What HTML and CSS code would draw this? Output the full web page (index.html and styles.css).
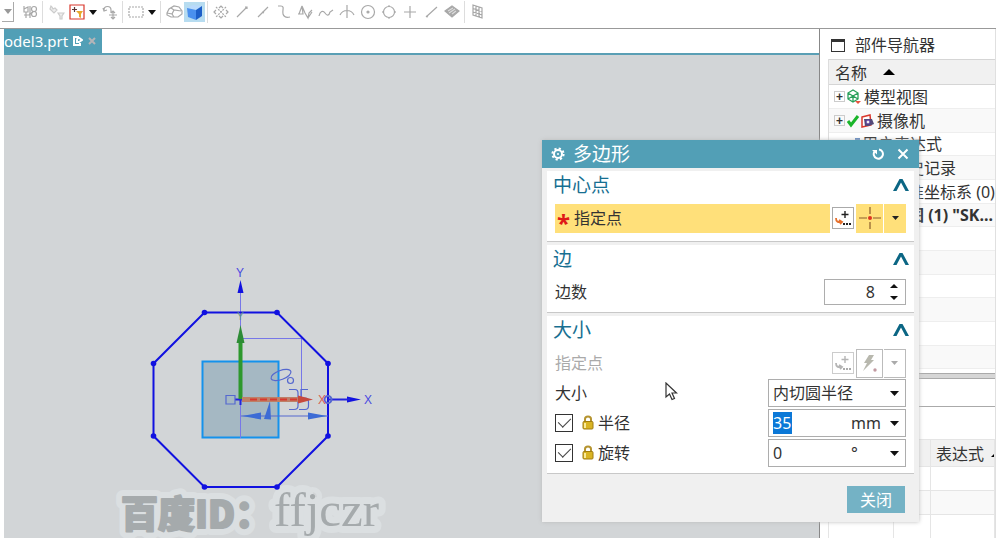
FILE: index.html
```html
<!DOCTYPE html>
<html lang="zh-CN">
<head>
<meta charset="utf-8">
<title>model3.prt</title>
<link rel="stylesheet" href="styles.css">
</head>
<body>
<div class="app">
  <div class="toolbar" role="toolbar" aria-label="草图工具">
    <button class="drop dim boxed" aria-label="更多"><svg width="8" height="5"><path d="M0 0H8L4 5Z"/></svg></button>
    <span class="sep none"></span>
    <button class="tool" aria-label="装配"><svg viewBox="0 0 18 18"><path d="M3 3v6h4V4L3 6M5 9v6M3 12h5l4-3M9 3v12"/><circle cx="13" cy="6" r="2.500"/><circle cx="13" cy="11" r="2.500"/></svg></button>
    <span class="sep"></span>
    <button class="tool faint" aria-label="重置过滤器"><svg viewBox="0 0 18 18"><path d="M4 3l-1 3 4 4 3-3-2-2-2 1-1-2zM11 10h6l-2 3v3h-2v-3z"/></svg></button>
    <button class="tool" aria-label="选择过滤器"><svg viewBox="0 0 18 18"><path class="redbox" d="M2 2H16V16H2Z"/><path class="dark" d="M6.500 4v5M4 6.500h5"/><path class="gold" d="M8 8h7l-2 3v4l-2-1v-3z"/></svg></button>
    <button class="drop" aria-label="过滤选项"><svg width="8" height="5"><path d="M0 0H8L4 5Z"/></svg></button>
    <button class="tool" aria-label="移动对象"><svg viewBox="0 0 18 18"><path d="M3 7a3.500 3.500 0 0 1 7 0v3M2 5l1 3 3-1M8 12h8M12 8v8M10 10l2-2 2 2M10 14l2 2 2-2"/></svg></button>
    <span class="sep"></span>
    <button class="tool" aria-label="矩形选择"><svg viewBox="0 0 18 18"><path class="dash" d="M2 4H16V14H2Z"/></svg></button>
    <button class="drop" aria-label="选择方式"><svg width="8" height="5"><path d="M0 0H8L4 5Z"/></svg></button>
    <span class="sep"></span>
    <button class="tool" aria-label="线框"><svg viewBox="0 0 18 18"><path d="M2 10l2-4 5-3 5 1 3 4v3l-4 3H6l-4-2zM2 10l5 1 2 3M7 11l2-4 7 1M9 7L6 5"/></svg></button>
    <button class="tool on" aria-label="着色"><svg viewBox="0 0 18 18"><path class="c1" d="M1 5l6-3 9 1-6 4z"/><path class="c2" d="M1 5l9 2v10l-8-3z"/><path class="c3" d="M10 7l6-4v10l-6 4z"/></svg></button>
    <span class="sep"></span>
    <button class="tool" aria-label="捕捉"><svg viewBox="0 0 18 18"><path class="dash" d="M4 4l10 10M14 4L4 14"/><path d="M7 5l2-2 2 2M7 13l2 2 2-2M4 7L2 9l2 2M14 7l2 2-2 2"/></svg></button>
    <button class="tool" aria-label="端点"><svg viewBox="0 0 18 18"><path d="M4 14L14 4M12 4h2v2"/></svg></button>
    <button class="tool" aria-label="中点"><svg viewBox="0 0 18 18"><path d="M4 14L14 4M8 9l2 1"/></svg></button>
    <button class="tool" aria-label="控制点"><svg viewBox="0 0 18 18"><path d="M3 3h3c4 0 1 5 2 8 1 3 3 4 7 3"/></svg></button>
    <button class="tool" aria-label="极点"><svg viewBox="0 0 18 18"><path d="M2 11h5L6 3l-3 8M6 3l3 7 3 5 1-5 3-3M12 15l4-6"/></svg></button>
    <button class="tool" aria-label="样条"><svg viewBox="0 0 18 18"><path d="M2 13c1-5 4-6 6-3s4 3 5-1l3-2"/></svg></button>
    <button class="tool" aria-label="交点"><svg viewBox="0 0 18 18"><path d="M9 2v13M2 12c3-6 11-6 14 0"/></svg></button>
    <button class="tool" aria-label="圆心"><svg viewBox="0 0 18 18"><circle cx="9" cy="9" r="6.500"/><circle class="fill" cx="9" cy="9" r="1"/></svg></button>
    <button class="tool" aria-label="象限点"><svg viewBox="0 0 18 18"><circle cx="9" cy="9" r="5.500"/><path d="M8 3h2M8 15h2M3 8v2M15 8v2"/></svg></button>
    <button class="tool" aria-label="现有点"><svg viewBox="0 0 18 18"><path d="M9 3v12M3 9h12"/></svg></button>
    <button class="tool" aria-label="曲线上的点"><svg viewBox="0 0 18 18"><path d="M4 14L15 4M4 13l2 1"/></svg></button>
    <button class="tool" aria-label="面上的点"><svg viewBox="0 0 18 18"><path class="fill" d="M2 8l7-5 7 5-7 6z"/><path class="light" d="M5 8l5-3M6 10l6-4M9 11l4-3"/></svg></button>
    <span class="sep"></span>
    <button class="tool" aria-label="网格"><svg viewBox="0 0 18 18"><path d="M4 2l9 3v10l-9-3zM4 5.500l9 3M4 9l9 3M7 3v10M10 4v10"/></svg></button>
  </div>

  <div class="main">
    <main class="work">
      <div class="tabs">
        <div class="tab"><span class="name">odel3.prt</span>
          <svg width="10" height="10" viewBox="0 0 10 10"><path class="line" d="M6 1H1V9H7V7M5 1L9 4L6 6H4V4Z"/></svg>
          <button class="tabclose" aria-label="关闭标签"><svg width="8" height="8" viewBox="0 0 8 8"><path d="M1 1L7 7M7 1L1 7"/></svg></button>
        </div>
      </div>
      <div class="canvas">
        <svg class="drawing" width="400" height="483" viewBox="4 55 400 483">
          <g class="halo"><text class="wm1" x="121" y="528">百度ID：</text><text class="wm2" x="274" y="526">ffjczr</text></g>
          <g class="mark"><text class="wm1" x="121" y="528">百度ID：</text><text class="wm2" x="274" y="526">ffjczr</text></g>
          <rect class="square" x="202.500" y="361.500" width="76" height="76"/>
          <path class="thin" d="M240.500 290V438M240 338.500H302M301.500 338V398M328 363V438"/>
          <path class="oct" d="M204.500 312.500H277L328 363.500V436L277 487H204.500L153.500 436V363.500Z"/>
          <g class="dots"><circle cx="204.500" cy="312.500" r="2.800"/><circle cx="277" cy="312.500" r="2.800"/><circle cx="328" cy="363.500" r="2.800"/><circle cx="328" cy="436" r="2.800"/><circle cx="277" cy="487" r="2.800"/><circle cx="204.500" cy="487" r="2.800"/><circle cx="153.500" cy="436" r="2.800"/><circle cx="153.500" cy="363.500" r="2.800"/>
            <path d="M240.500 280L243.500 293H237.500ZM361 399.500L347 396.500V402.500Z"/></g>
          <path class="axis" d="M328 399.500H350M235 399.500H244M240.500 395V405"/>
          <path class="dim1" d="M241 416H328M226 395.500H235V404H226ZM289 389.500H295Q298 389.500 298 393V397Q298 399.500 294 399.500Q298 399.500 298 403V406Q298 409.500 294 409.500H289M308 389.500H301V398H305Q308.500 398 308.500 402V406Q308.500 409.500 305 409.500H299"/>
          <path class="dim2" d="M242 416L261 412.500V419.500ZM327 416L308 412.500V419.500ZM270 401L271 419.500L264 419Z"/>
          <ellipse class="dim1" cx="281" cy="375" rx="10.500" ry="4.500" transform="rotate(-20 281 375)"/><circle class="dim1" cx="290.500" cy="380.500" r="3"/>
          <circle class="dim1 knot" cx="328" cy="399.500" r="3.500"/>
          <path class="green" d="M240.500 399V340"/><path class="greenhead" d="M240.500 325L244.500 343H236.500Z"/>
          <path class="red" d="M242 399.500H300"/><path class="reddash" d="M250 399.500H300"/><path class="redhead" d="M313 399.500L298 395.500V403.500Z"/>
          <text class="lab" x="236" y="277">Y</text><text class="lab" x="364" y="404">X</text><text class="lab gy" x="237" y="320">Y</text><text class="lab rx" x="318" y="404">X</text>
        </svg>
      </div>
    </main>

    <aside class="side">
      <h2 class="sidehead"><span class="winicon"></span>部件导航器</h2>
      <div class="tree">
        <div class="treehead">名称<svg width="12" height="6"><path d="M0 6H12L6 0Z"/></svg></div>
        <div class="row"><button class="plus" aria-label="展开">+</button><svg width="15" height="16" viewBox="0 0 15 16"><path class="gr" d="M1 4L6 1L11 4V10L6 13L1 10ZM1 4L6 7L11 4M6 7V13M1 10L6 7L11 10"/><path class="rd" d="M8 12L14 12L11 15"/></svg><span>模型视图</span></div>
        <div class="row alt"><button class="plus" aria-label="展开">+</button><svg width="28" height="16" viewBox="0 0 28 16"><path class="tick" d="M1 8L4 12L11 3"/><path class="cam" d="M15 4L23 2L24 12L15 14Z"/><path class="camb" d="M17 6h8l2 5-5 2h-4z"/><circle class="lens" cx="21" cy="9" r="2"/></svg><span>摄像机</span></div>
        <div class="row tight"><i class="blue"></i><span>用户表达式</span></div>
        <div class="row alt deep"><span>历史记录</span></div>
        <div class="row deep"><span>基准坐标系 (0)</span></div>
        <div class="row alt deep strong"><span>草图 (1) "SK...</span></div>
        <div class="row"></div><div class="row alt"></div><div class="row"></div><div class="row alt"></div><div class="row"></div><div class="row alt"></div>
      </div>
      <div class="bar"></div>
      <div class="gap"></div>
      <table class="deps">
        <thead><tr><th></th><th></th><th>表达式<svg width="10" height="6"><path d="M0 6H12L6 0Z"/></svg></th></tr></thead>
        <tbody><tr><td></td><td></td><td></td></tr><tr class="alt"><td></td><td></td><td></td></tr><tr><td></td><td></td><td></td></tr><tr class="alt"><td></td><td></td><td></td></tr></tbody>
      </table>
    </aside>
  </div>

  <form class="dialog" role="dialog" aria-labelledby="dlg">
    <header class="title">
      <svg width="14" height="14" viewBox="0 0 14 14"><circle class="gear" cx="7" cy="7" r="5.600"/><circle class="ring" cx="7" cy="7" r="4"/><circle class="hub" cx="7" cy="7" r="1"/></svg>
      <h1 id="dlg">多边形</h1>
      <button type="button" aria-label="重置"><svg width="12" height="12" viewBox="0 0 12 12"><path d="M2.500 3.500A4.600 4.600 0 1 0 7 1.500"/><path class="solid" d="M0 2H5V6.500Z"/></svg></button>
      <button type="button" aria-label="关闭窗口"><svg width="12" height="12" viewBox="0 0 12 12"><path d="M1.500 1.500L10.500 10.500M10.500 1.500L1.500 10.500"/></svg></button>
    </header>

    <section class="group first">
      <div class="grouphead"><h2>中心点</h2><button type="button" aria-label="折叠中心点"><svg width="16" height="12" viewBox="0 0 16 12"><path d="M0 12L6.500 0H9.500L16 12H12.500L8 3.500L3.500 12Z"/></svg></button></div>
      <div class="line">
        <div class="pick"><b>*</b>指定点</div>
        <button type="button" class="ptbtn" aria-label="点对话框"><svg width="18" height="18" viewBox="0 0 18 18"><path class="k" d="M11 2V9M7.500 5.500H14.500"/><path class="o" d="M2 9Q2 14 7 13M5 11L8 13L6 15"/><path class="d" d="M9 14h2v2H9zM12 14h2v2h-2zM15 14h2v2h-2z"/></svg></button>
        <div class="pair yellow"><button type="button" aria-label="光标位置"><svg width="22" height="22" viewBox="0 0 22 22"><path class="cross" d="M11 0V7M11 15V22M0 11H8M14 11H22"/><circle class="dot" cx="11" cy="11" r="2"/></svg></button><button type="button" class="narrow" aria-label="点类型"><svg width="7" height="4"><path d="M0 0H7L3.500 4Z"/></svg></button></div>
      </div>
    </section>

    <section class="group">
      <div class="grouphead"><h2>边</h2><button type="button" aria-label="折叠边"><svg width="16" height="12" viewBox="0 0 16 12"><path d="M0 12L6.500 0H9.500L16 12H12.500L8 3.500L3.500 12Z"/></svg></button></div>
      <div class="line">
        <label for="sides">边数</label>
        <div class="field spin"><input id="sides" value="8" inputmode="numeric"><span class="steps"><button type="button" aria-label="增加"><svg width="8" height="4"><path d="M0 4H8L4 0Z"/></svg></button><button type="button" aria-label="减少"><svg width="8" height="4"><path d="M0 0H8L4 4Z"/></svg></button></span></div>
      </div>
    </section>

    <section class="group">
      <div class="grouphead"><h2>大小</h2><button type="button" aria-label="折叠大小"><svg width="16" height="12" viewBox="0 0 16 12"><path d="M0 12L6.500 0H9.500L16 12H12.500L8 3.500L3.500 12Z"/></svg></button></div>
      <div class="line off">
        <span class="lbl">指定点</span>
        <button type="button" class="ptbtn" disabled aria-label="点对话框"><svg width="18" height="18" viewBox="0 0 18 18"><path class="k" d="M11 2V9M7.500 5.500H14.500"/><path class="o" d="M2 9Q2 14 7 13M5 11L8 13L6 15"/><path class="d" d="M9 14h2v2H9zM12 14h2v2h-2zM15 14h2v2h-2z"/></svg></button>
        <div class="pair"><button type="button" disabled aria-label="自动判断"><svg width="18" height="20" viewBox="0 0 18 20"><path class="bolt" d="M8 2L13 2L10 7H13L2 18L6 10H3Z"/><circle class="bdot" cx="14" cy="17" r="1.700"/></svg></button><button type="button" disabled class="narrow" aria-label="点类型"><svg width="7" height="4"><path d="M0 0H7L3.500 4Z"/></svg></button></div>
      </div>
      <div class="line">
        <label for="mode">大小</label>
        <div class="field sel"><select id="mode"><option>内切圆半径</option><option>外接圆半径</option><option>边长</option></select><svg width="9" height="5"><path d="M0 0H9L4.500 5Z"/></svg></div>
      </div>
      <div class="line">
        <input type="checkbox" id="lockr" checked><label class="locked" for="lockr"><svg width="12" height="15" viewBox="0 0 12 15"><path class="shackle" d="M3 7V4Q3 1.500 6 1.500T9 4V7"/><rect class="body" x="1" y="6.500" width="10" height="7.500" rx="1"/><path class="shine" d="M3 8V13"/></svg>半径</label>
        <div class="field val"><input class="selected" value="35" aria-label="半径值"><span class="unit">mm</span><button type="button" aria-label="半径选项"><svg width="9" height="5"><path d="M0 0H9L4.500 5Z"/></svg></button></div>
      </div>
      <div class="line">
        <input type="checkbox" id="locka" checked><label class="locked" for="locka"><svg width="12" height="15" viewBox="0 0 12 15"><path class="shackle" d="M3 7V4Q3 1.500 6 1.500T9 4V7"/><rect class="body" x="1" y="6.500" width="10" height="7.500" rx="1"/><path class="shine" d="M3 8V13"/></svg>旋转</label>
        <div class="field val"><input value="0" aria-label="旋转值"><span class="unit">°</span><button type="button" aria-label="旋转选项"><svg width="9" height="5"><path d="M0 0H9L4.500 5Z"/></svg></button></div>
      </div>
    </section>
    <footer><button type="button" class="close">关闭</button></footer>
  </form>

  <svg class="cursor" width="13" height="19" viewBox="0 0 13 19"><path d="M1 1V15L4.500 12L7 17.500L9.500 16.500L7 11H11.500Z"/></svg>
</div>
</body>
</html>
```
FILE: styles.css
```css
* { box-sizing: border-box; }
body {
  margin: 0;
  background: #fff;
  color: #333;
  font: 16px/24px "Noto Sans", "Noto Sans CJK SC", sans-serif;
}
button, input, select { font: inherit; color: inherit; margin: 0; padding: 0; border: 0; background: none; }
button { display: flex; align-items: center; justify-content: center; }
h1, h2 { margin: 0; font-weight: 400; }
svg { flex: none; display: block; }
.app { position: relative; display: flex; flex-direction: column; height: 100vh; overflow: hidden; padding: 0 4px 0 0; }

/* toolbar */
.toolbar { display: flex; align-items: center; height: 29px; padding: 0 0 4px 2px; border-bottom: 1px solid #999; }
.tool { width: 21px; height: 20px; }
.tool svg { width: 18px; height: 18px; fill: none; stroke: #a8a8a8; stroke-width: 1.2; }
.tool.faint svg { stroke: #ccc; fill: #eee; }
.drop { width: 12px; height: 20px; }
.drop svg { fill: #111; }
.drop.dim svg { fill: #999; }
.boxed { border-right: 1px solid #aaa; border-bottom: 1px solid #aaa; }
.sep { width: 1px; height: 22px; margin: 0 2px; background: #ddd; }
.sep.none { background: none; }
.tool .redbox { stroke: #d9372c; }
.tool .dark { stroke: #5c3434; }
.tool .gold { fill: #e9a92c; stroke: none; }
.tool .dash { stroke-dasharray: 2 1; }
.tool .fill { fill: #a8a8a8; }
.tool .light { stroke: #ddd; }
.tool.on { background: #b7dcf0; }
.tool.on svg { stroke: none; }
.c1 { fill: #b9dafc; }
.c2 { fill: #4a90ee; }
.c3 { fill: #1d5fc8; }

/* work area */
.main { flex: 1; display: flex; min-height: 0; }
.work { flex: 1; display: flex; flex-direction: column; min-width: 0; margin-left: 4px; }
.tabs { display: flex; height: 26px; border-bottom: 2px solid #5a9fb5; }
.tab { display: flex; align-items: center; gap: 5px; width: 98px; background: #529fb6; color: #fff; font-size: 15px; }
.tab .name { white-space: nowrap; }
.tab .line { height: auto; fill: none; stroke: #fff; stroke-width: 2; }
.tabclose svg { stroke: #b5b5b8; stroke-width: 2; }
.canvas { flex: 1; min-height: 0; overflow: hidden; background: #d2d5d7; }

/* sketch */
.halo text { fill: #dbdfe1; stroke: #dbdfe1; stroke-width: 14; stroke-linejoin: round; }
.mark text { fill: #a5aaac; }
.mark .wm1 { stroke: #a5aaac; stroke-width: 2; stroke-linejoin: round; }
.wm1 { font: 900 37px "Noto Sans CJK SC", sans-serif; }
.wm2 { font: 49px "Liberation Serif", serif; }
.square { fill: #a5b8c3; stroke: #1492ec; stroke-width: 2; }
.thin { fill: none; stroke: #7777e8; }
.oct { fill: none; stroke: #1111e0; stroke-width: 2; }
.dots { fill: #1111e0; }
.axis { stroke: #2222dd; stroke-width: 2; }
.dim1 { fill: none; stroke: #5568cf; stroke-width: 1.2; }
.knot { stroke-width: 2; }
.dim2 { fill: #3c6bd5; }
.green { stroke: #2d982d; stroke-width: 4; }
.greenhead { fill: #2d8c35; }
.red { stroke: #bd8068; stroke-width: 5; }
.reddash { stroke: #d9372c; stroke-width: 2; stroke-dasharray: 7 3; }
.redhead { fill: #c7493c; }
.lab { font: 12px "Liberation Sans", sans-serif; fill: #4a4ae0; }
.gy { font-size: 10px; fill: #5b9084; }
.rx { fill: #d95f52; }

/* navigator */
.side { width: 177px; border-left: 1px solid #888; border-right: 1px solid #e0e0e0; padding-left: 8px; overflow: hidden; }
.sidehead { display: flex; align-items: center; gap: 10px; height: 30px; padding: 2px 0 0 3px; font-size: 16px; }
.winicon { width: 14px; height: 13px; border: 1px solid #333; border-top-width: 3px; }
.tree, .deps { border-left: 1px solid #ddd; }
.treehead { display: flex; align-items: center; gap: 16px; height: 26px; padding: 2px 0 0 6px; background: #f1f1f1; border: solid #d5d5d5; border-width: 1px 0; }
.treehead svg { margin-bottom: 2px; }
.row { display: flex; align-items: center; gap: 2px; height: 24px; padding-left: 5px; border-bottom: 1px solid #eee; white-space: nowrap; }
.row:nth-child(3n+1) { height: 23px; }
.alt { background: #f9f9f9; }
.tight { padding-left: 26px; }
.blue { width: 5px; height: 12px; background: #5d86c0; }
.deep { padding-left: 63px; }
.strong { font-weight: 700; }
.plus { width: 11px; height: 11px; border: 1px solid #ccc; font: 700 12px/8px "Liberation Sans", sans-serif; }
.gr { fill: none; stroke: #28a05a; stroke-width: 1.3; }
.rd { fill: #e5533f; }
.tick { fill: none; stroke: #1ab52a; stroke-width: 3; }
.cam { fill: #fff; stroke: #d9372c; stroke-width: 1.5; }
.camb { fill: #534a78; }
.lens { fill: #eee; stroke: #55339c; }
.bar { height: 6px; margin-top: 4px; background: #d6d6d6; border: solid #aaa; border-width: 1px 0; }
.gap { height: 60px; background: linear-gradient(#fff 27px, #aaa 27px, #aaa 28px, #fff 28px); }
.deps { width: 100%; table-layout: fixed; border-collapse: collapse; }
.deps th, .deps td { height: 24px; padding: 0; border: 1px solid #e5e5e5; }
.deps th { height: 26px; padding-top: 2px; background: #f1f1f1; font-weight: 400; white-space: nowrap; text-align: left; }
.deps th:nth-child(1) { width: 65px; }
.deps th:nth-child(2) { width: 37px; }
.deps th:nth-child(3) { padding-left: 5px; overflow: hidden; }
.deps th svg { display: inline-block; margin: 0 0 3px 7px; overflow: hidden; }

/* dialog */
.dialog { position: absolute; top: 140px; right: 81px; width: 377px; padding-bottom: 9px; background: #f0f0f0; box-shadow: 0 0 4px #bbb; color: #333; }
.title { display: flex; align-items: center; height: 28px; padding: 0 10px 0 9px; background: #529fb6; color: #fff; }
.title h1 { flex: 1; margin-left: 8px; font-size: 19px; }
.title button { width: 12px; margin-left: 13px; }
.title button svg { fill: none; stroke: #fff; stroke-width: 2; }
.title .solid { fill: #fff; stroke: none; }
.gear { fill: none; stroke: #fff; stroke-width: 2; stroke-dasharray: 2.2 2.2; }
.ring { fill: none; stroke: #fff; stroke-width: 2; }
.hub { fill: #fff; }
.group { margin: 3px 5px 0; padding: 0 8px 5px; background: #fff; border-bottom: 1px solid #c8c8c8; }
.group.first { padding-bottom: 8px; }
.grouphead { display: flex; align-items: center; justify-content: space-between; height: 28px; margin: 0 -3px 4px -2px; }
.grouphead h2 { font-size: 19px; color: #176f91; }
.grouphead svg { fill: #0b6684; }
.line { display: flex; align-items: center; gap: 2px; height: 30px; }
.line > label:first-child, .lbl { flex: 1; }
.off { color: #aaa; }
.pick { flex: 1; display: flex; align-items: center; gap: 5px; height: 29px; padding-left: 2px; background: #ffe07a; }
.pick b { width: 12px; height: 24px; font: 700 24px/34px "Noto Sans", sans-serif; color: #e01818; }
.ptbtn { width: 22px; height: 22px; border: 1px solid #aaa; }
.pair { display: flex; gap: 1px; width: 50px; height: 29px; }
.pair button { flex: 1; border: 1px solid #bbb; }
.pair .narrow { flex: none; width: 22px; border-left: 0; }
.pair svg { fill: #222; }
.yellow button { background: #ffe07a; border: 0; }
.cross { stroke: #8b5d2c; stroke-width: 1.2; }
.dot { fill: #e0351f; }
.k { fill: none; stroke: #222; stroke-width: 1.4; }
.o { fill: none; stroke: #e6702c; stroke-width: 1.8; }
.d { fill: #222; }
.off .k, .off .o { stroke: #b5b5b5; }
.off .d, .off .pair svg { fill: #aaa; }
.off .ptbtn { border-color: #ccc; }
.off .pair .bolt { fill: #b8b8ae; }
.off .pair .bdot { fill: #c29aa2; }
.field { display: flex; align-items: center; width: 138px; height: 28px; padding: 0 6px 0 4px; border: 1px solid #adadad; }
.field svg { fill: #111; }
.field input { width: 40px; min-width: 0; height: 22px; }
.spin { width: 82px; height: 26px; padding-right: 7px; }
.spin input { flex: 1; text-align: right; }
.steps { display: flex; flex-direction: column; gap: 8px; margin-left: 15px; }
.sel select { flex: 1; appearance: none; outline: 0; }
.line > .val, .line > .sel { margin-left: auto; }
.field input.selected { width: 19px; margin-right: 21px; background: #0b78d7; color: #fff; }
.unit { flex: 1; margin-left: 38px; }
input[type="checkbox"] { appearance: none; display: grid; place-items: center; width: 18px; height: 18px; border: 1px solid #333; }
input[type="checkbox"]:checked::after { content: ""; width: 6px; height: 11px; margin-bottom: 4px; border: solid #444; border-width: 0 1px 1px 0; rotate: 45deg; }
.locked { display: flex; align-items: center; gap: 4px; margin-left: 7px; }
.locked svg { margin-bottom: 2px; }
.shackle { fill: none; stroke: #b59431; stroke-width: 2; }
.body { fill: #d9b424; stroke: #a17d12; }
.shine { stroke: #f8ea9c; stroke-width: 2; }
footer { display: flex; justify-content: flex-end; padding: 12px 14px 0 0; }
.close { width: 58px; height: 27px; background: #74b2c5; color: #fff; }
.cursor { position: absolute; left: 665px; top: 382px; fill: #fff; stroke: #333; stroke-width: 1.2; }
```
